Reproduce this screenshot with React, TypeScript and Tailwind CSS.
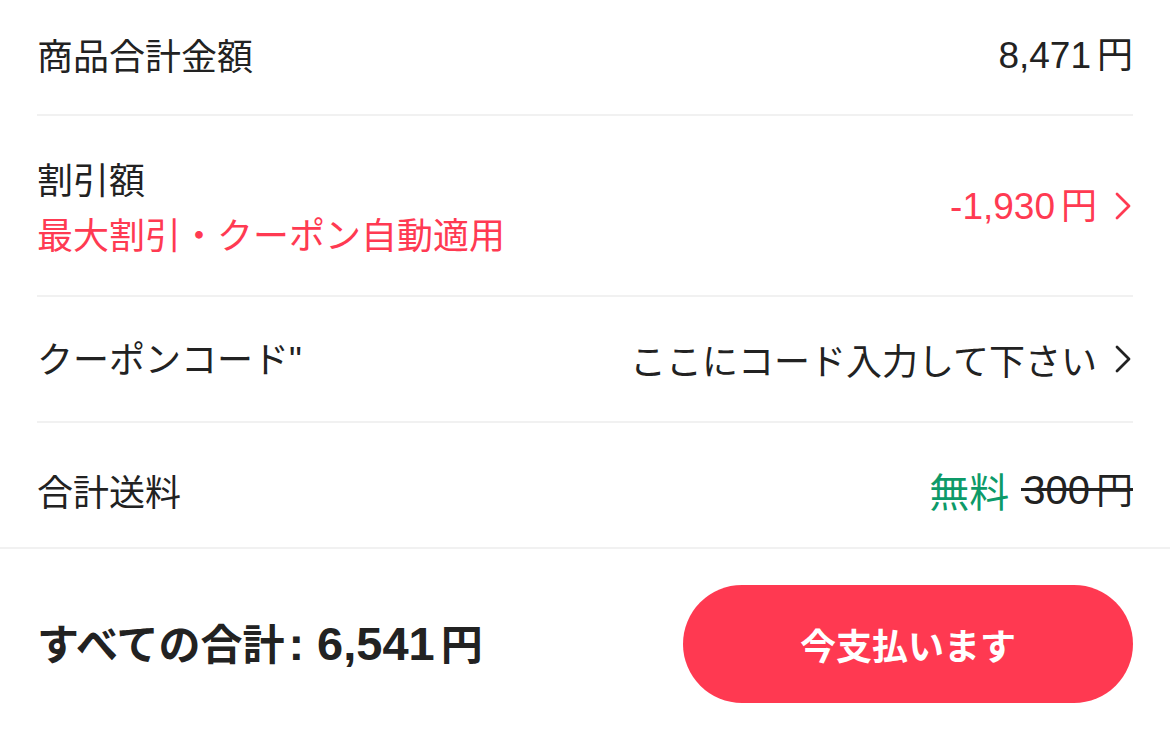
const cjk = { fontFamily: '"Noto Sans CJK JP", "Noto Sans", sans-serif' };
const latin = { fontFamily: '"Liberation Sans", Arial, sans-serif' };

function Chevron({ color }: { color: string }) {
  return (
    <svg width="20" height="32" viewBox="0 0 20 32" fill="none" className="ml-[16px]">
      <path d="M4 4 L16 16 L4 28" stroke={color} strokeWidth="2.8" strokeLinecap="round" strokeLinejoin="round" />
    </svg>
  );
}

function Yen({ value, className = '', numClass = 'text-[37px]' }: { value: string; className?: string; numClass?: string }) {
  return (
    <span className={className}>
      <span style={latin} className={numClass}>{value}</span>
      <span className="ml-[6px]">円</span>
    </span>
  );
}

export default function App() {
  return (
    <div className="w-[1170px] h-[739px] bg-white text-[#222] overflow-hidden" style={cjk}>
      <div className="px-[37px]">
        <div className="h-[114px] pb-[6px] flex items-center justify-between text-[36px]">
          <span>商品合計金額</span>
          <Yen value="8,471" />
        </div>
        <div className="h-[2px] bg-[#f1f1f1]" />

        <div className="h-[179px] flex items-center justify-between text-[36px]">
          <div className="flex flex-col leading-[55px]">
            <span>割引額</span>
            <span className="text-[#ff3a52]">最大割引・クーポン自動適用</span>
          </div>
          <div className="flex items-center text-[#ff3a52]">
            <Yen value="-1,930" />
            <Chevron color="#ff3a52" />
          </div>
        </div>
        <div className="h-[2px] bg-[#f1f1f1]" />

        <div className="h-[124px] flex items-center justify-between text-[36px]">
          <span>
            クーポンコード<span style={latin}>"</span>
          </span>
          <div className="flex items-center">
            <span>ここにコード入力して下さい</span>
            <Chevron color="#222" />
          </div>
        </div>
        <div className="h-[2px] bg-[#f1f1f1]" />

        <div className="h-[124px] flex items-center justify-between text-[36px] pt-[10px]">
          <span>合計送料</span>
          <div className="flex items-center gap-[14px]">
            <span className="text-[#0d9a68] text-[40px]">無料</span>
            <Yen
              value="300"
              numClass="text-[40px]"
              className="relative inline-block text-[37px] after:absolute after:-left-[2px] after:right-0 after:top-[47%] after:h-[3px] after:bg-[#222] after:content-['']"
            />
          </div>
        </div>
      </div>
      <div className="h-[2px] bg-[#f1f1f1]" />

      <div className="h-[190px] px-[37px] flex items-center justify-between">
        <span className="text-[42px] font-bold">
          すべての合計
          <span style={latin} className="text-[47px] ml-[4px]">: 6,541</span>
          <span className="ml-[6px]">円</span>
        </span>
        <button className="w-[450px] h-[118px] rounded-full bg-[#ff3951] text-white text-[36px] font-bold flex items-center justify-center">
          今支払います
        </button>
      </div>
    </div>
  );
}
